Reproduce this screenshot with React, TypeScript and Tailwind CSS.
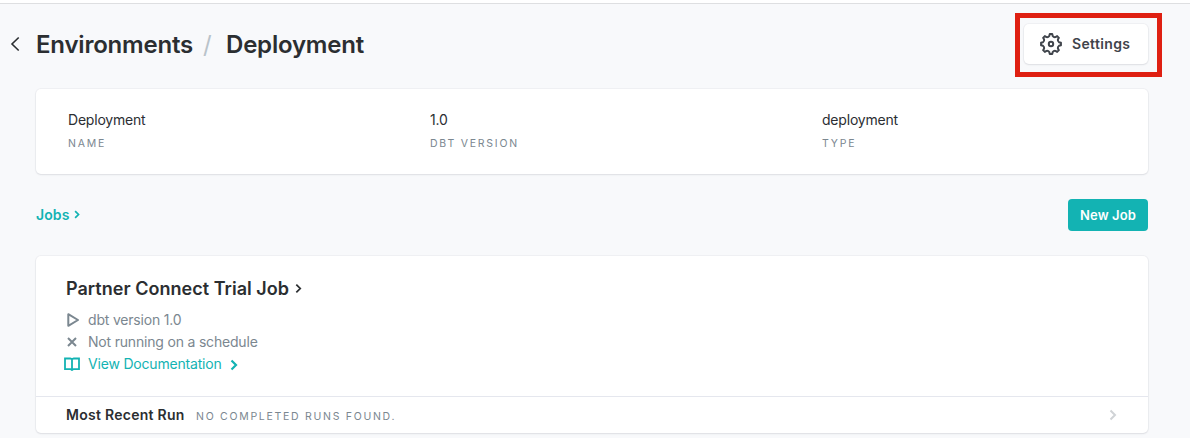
import React from "react";

const polar = (radius: number, degrees: number) => {
  const a = (degrees * Math.PI) / 180;
  return `${(12 + radius * Math.sin(a)).toFixed(2)} ${(12 - radius * Math.cos(a)).toFixed(2)}`;
};

const gearPath =
  [0, 45, 90, 135, 180, 225, 270, 315]
    .map(
      (t, i) =>
        `${i ? "L" : "M"}${polar(10, t - 7)}L${polar(10, t + 7)}L${polar(8.2, t + 12)}Q${polar(7.1, t + 22.5)} ${polar(8.2, t + 33)}`,
    )
    .join("") + "Z";

function Gear() {
  return (
    <svg className="size-6 shrink-0" viewBox="0 0 24 24" fill="none" stroke="currentColor" strokeWidth="2" strokeLinejoin="round">
      <path d={gearPath} />
      <circle cx="12" cy="12" r="2.2" />
    </svg>
  );
}

function Chevron({ className, strokeWidth }: { className: string; strokeWidth: number }) {
  return (
    <svg className={className} viewBox="0 0 8 12" fill="none" stroke="currentColor" strokeWidth={strokeWidth}>
      <path d="M1.5 1.5 6 6l-4.5 4.5" />
    </svg>
  );
}

function Field({ value, label, className }: { value: string; label: string; className: string }) {
  return (
    <div className={className}>
      <div className="text-[14px] leading-5 tracking-[-0.2px] text-[#2b2e33]">{value}</div>
      <div className="mt-[5px] text-[10.5px] leading-[18px] tracking-[1.78px] text-[#7b8790]">{label}</div>
    </div>
  );
}

const card = "rounded-[5px] bg-white shadow-[0_0_0_1px_rgba(30,40,50,0.035),0_1px_2px_rgba(30,40,50,0.09)]";

export default function App() {
  return (
    <div className="h-[438px] w-[1190px] overflow-hidden bg-[#f8f9fb] font-['Inter',sans-serif] text-[#2b2e31]">
      <div className="h-1 border-b border-[#dedfe1] bg-white" />
      <header className="flex h-[85px] items-start justify-between pr-7">
        <div className="flex pt-6">
          <svg className="mt-2 ml-2.5 h-4 w-[10px]" viewBox="0 0 10 16" fill="none" stroke="currentColor" strokeWidth="1.6">
            <path d="M8.7 1.5 2 8l6.7 6.5" />
          </svg>
          <h1 className="ml-4 flex text-[24px] leading-[34px] font-semibold">
            <span className="w-[167px] tracking-[-0.2px]">Environments</span>
            <span className="w-[23px] font-normal text-[#b9c3ca]">/</span>
            <span className="tracking-[-0.2px]">Deployment</span>
          </h1>
        </div>
        <div className="mt-[9px] h-16 w-[147px] border-[5px] border-[#df2012] p-1 pt-[6px]">
          <button className={`flex h-10 w-[124px] items-center pl-[15px] text-[14px] font-semibold text-[#3f444b] ${card}`}>
            <Gear />
            <span className="mb-0.5 ml-[9px] tracking-[0.35px]">Settings</span>
          </button>
        </div>
      </header>
      <main className="w-[1148px] pl-9">
        <section className={`flex h-[85px] pt-[21px] pl-8 ${card}`}>
          <Field className="w-[362px]" value="Deployment" label="NAME" />
          <Field className="w-[392px]" value="1.0" label="DBT VERSION" />
          <Field className="w-[200px]" value="deployment" label="TYPE" />
        </section>
        <div className="flex h-[82px] items-center justify-between">
          <a className="mb-0.5 flex items-center text-[14px] font-semibold text-[#13b3b3]">
            <span className="tracking-[0.1px]">Jobs</span>
            <Chevron className="mt-px ml-[5px] h-[9px] w-[6px]" strokeWidth={2.3} />
          </a>
          <button className="h-8 w-20 rounded-[4px] bg-[#13b3b3] pt-px text-[13px] font-semibold tracking-[0.1px] text-white">New Job</button>
        </div>
        <section className={`h-[177px] ${card}`}>
          <div className="h-[140px] pt-5 pl-[30px]">
            <h2 className="flex items-center text-[18px] leading-[26px] font-semibold">
              <span className="tracking-[0.03px]">Partner Connect Trial Job</span>
              <Chevron className="mb-px ml-1.5 h-[11px] w-[7px]" strokeWidth={2} />
            </h2>
            <ul className="mt-[7px] text-[14px] leading-[22px] tracking-[-0.19px] text-[#7b8790]">
              <li className="flex items-center">
                <svg className="mr-2 h-[14px] w-[14px]" viewBox="0 0 14 14" fill="none" stroke="currentColor" strokeWidth="2" strokeLinejoin="round">
                  <path d="M2.3 1.2v11.6L12 7z" />
                </svg>
                dbt version 1.0
              </li>
              <li className="flex items-center">
                <svg className="mr-2 h-[14px] w-[14px]" viewBox="0 0 14 14" fill="none" stroke="currentColor" strokeWidth="2">
                  <path d="m2 3 8 8M10 3l-8 8" />
                </svg>
                Not running on a schedule
              </li>
              <li className="-ml-0.5 flex items-center text-[#13b3b3]">
                <svg className="mr-2 h-[14px] w-4" viewBox="0 0 16 14" fill="none" stroke="currentColor" strokeWidth="1.8">
                  <path d="M1 1.5h5.2L8 2.2l1.8-.7H15v10.6H9.5L8 12.8l-1.5-.7H1zM8 2v12" />
                </svg>
                View Documentation
                <Chevron className="mt-px ml-2 h-3 w-2" strokeWidth={2.2} />
              </li>
            </ul>
          </div>
          <div className="flex h-[37px] items-center justify-between border-t border-[#e5e7ee] pr-[31px] pl-[30px]">
            <div className="-mt-px flex items-baseline">
              <strong className="w-[130px] text-[14px] font-semibold tracking-[0.27px]">Most Recent Run</strong>
              <span className="text-[10.5px] tracking-[1.72px] text-[#7b8790]">NO COMPLETED RUNS FOUND.</span>
            </div>
            <Chevron className="h-3 w-2 text-[#d0d3d6]" strokeWidth={2} />
          </div>
        </section>
      </main>
    </div>
  );
}
